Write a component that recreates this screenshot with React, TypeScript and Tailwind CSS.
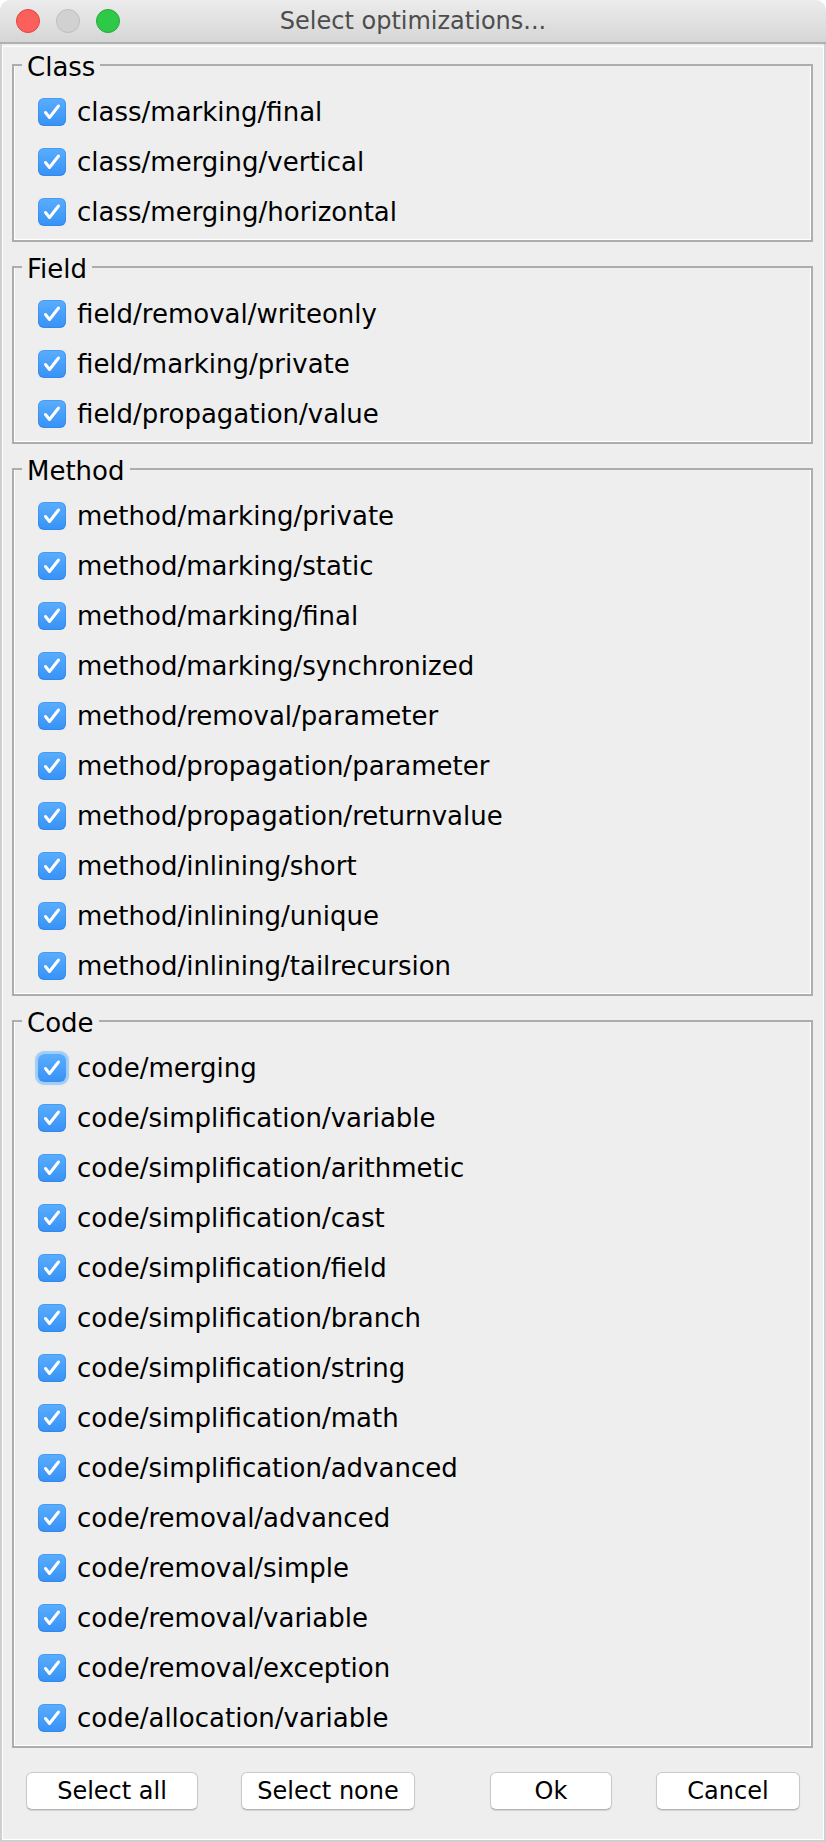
import * as React from "react";

const groups: { title: string; items: string[] }[] = [
  {
    title: "Class",
    items: ["class/marking/final", "class/merging/vertical", "class/merging/horizontal"],
  },
  {
    title: "Field",
    items: ["field/removal/writeonly", "field/marking/private", "field/propagation/value"],
  },
  {
    title: "Method",
    items: [
      "method/marking/private",
      "method/marking/static",
      "method/marking/final",
      "method/marking/synchronized",
      "method/removal/parameter",
      "method/propagation/parameter",
      "method/propagation/returnvalue",
      "method/inlining/short",
      "method/inlining/unique",
      "method/inlining/tailrecursion",
    ],
  },
  {
    title: "Code",
    items: [
      "code/merging",
      "code/simplification/variable",
      "code/simplification/arithmetic",
      "code/simplification/cast",
      "code/simplification/field",
      "code/simplification/branch",
      "code/simplification/string",
      "code/simplification/math",
      "code/simplification/advanced",
      "code/removal/advanced",
      "code/removal/simple",
      "code/removal/variable",
      "code/removal/exception",
      "code/allocation/variable",
    ],
  },
];

function CheckBox({ checked, focused, onToggle }: { checked: boolean; focused: boolean; onToggle: () => void }) {
  let look = "border border-[#b5b5b5] bg-white";
  if (checked) {
    look = focused
      ? "bg-linear-to-b from-[#5aaeff] to-[#3791f5] shadow-[0_0_1px_3px_#a3ccf5]"
      : "bg-linear-to-b from-[#5aaeff] to-[#3791f5] shadow-[inset_0_0_0_1px_rgba(40,120,220,0.35)]";
  }
  return (
    <button
      type="button"
      onClick={onToggle}
      className={`flex h-[28px] w-[28px] shrink-0 items-center justify-center rounded-[6px] ${look}`}
    >
      {checked && (
        <svg width="28" height="28" viewBox="0 0 28 28">
          <path d="M7.5 14.5 L11.5 19.5 L20.5 8" fill="none" stroke="#fff" strokeWidth="3" strokeLinecap="round" strokeLinejoin="round" />
        </svg>
      )}
    </button>
  );
}

function Group({
  title,
  items,
  checked,
  onToggle,
}: {
  title: string;
  items: string[];
  checked: Record<string, boolean>;
  onToggle: (name: string) => void;
}) {
  return (
    <fieldset className="ml-[9px] mr-[10px] mt-[8px] border-2 border-[#adadad] shadow-[inset_1px_0_0_#fff,inset_-1px_-1px_0_#fff] first:mt-[1px]">
      <legend className="ml-[8px] px-[5px] pt-[4px] text-[26px] leading-[30px] text-black">{title}</legend>
      <div className="pb-[3px] pl-[24px] pt-[5px]">
        {items.map((name) => (
          <div key={name} className="flex h-[50px] items-center gap-[11px]">
            <CheckBox checked={checked[name]} focused={name === "code/merging"} onToggle={() => onToggle(name)} />
            <span className="text-[26px] leading-[30px] text-black">{name}</span>
          </div>
        ))}
      </div>
    </fieldset>
  );
}

export default function App() {
  const [checked, setChecked] = React.useState<Record<string, boolean>>(() => {
    const all: Record<string, boolean> = {};
    groups.forEach((g) => g.items.forEach((i) => (all[i] = true)));
    return all;
  });

  const setAll = (value: boolean) => {
    const next: Record<string, boolean> = {};
    groups.forEach((g) => g.items.forEach((i) => (next[i] = value)));
    setChecked(next);
  };

  const btn =
    "flex h-[38px] items-center justify-center rounded-[6px] border border-[#c9c9c9] border-b-[#b4b4b4] bg-white text-[24px] text-black shadow-[0_1px_1px_rgba(0,0,0,0.12)]";

  return (
    <div className="h-[1842px] w-[826px] bg-white font-['DejaVu_Sans',sans-serif]">
      <div className="flex h-full flex-col overflow-hidden rounded-t-[10px]">
        {/* title bar */}
        <div className="grid h-[44px] shrink-0 grid-cols-[1fr_auto_1fr] items-center border-b-2 border-[#b0b0b0] bg-linear-to-b from-[#ececec] to-[#d6d6d6]">
          <div className="flex items-center gap-[16px] pl-[16px]">
            <span className="h-[24px] w-[24px] rounded-full border border-[#e0443e] bg-[#fc605c]" />
            <span className="h-[24px] w-[24px] rounded-full border border-[#bdbdbd] bg-[#d1d1d1]" />
            <span className="h-[24px] w-[24px] rounded-full border border-[#24a83a] bg-[#2fc94a]" />
          </div>
          <div className="text-[24px] text-[#4d4d4d]">Select optimizations...</div>
          <div />
        </div>

        {/* body */}
        <div className="flex flex-1 flex-col border-x-2 border-b-2 border-[#cfcfcf] bg-[#eeeeee] pt-[2px]">
          <div className="flex flex-1 flex-col border border-white">
            {groups.map((g) => (
              <Group
                key={g.title}
                title={g.title}
                items={g.items}
                checked={checked}
                onToggle={(name) => setChecked((c) => ({ ...c, [name]: !c[name] }))}
              />
            ))}

            <div className="mt-[24px] flex pl-[23px]">
              <button type="button" onClick={() => setAll(true)} className={`${btn} w-[172px]`}>
                Select all
              </button>
              <button type="button" onClick={() => setAll(false)} className={`${btn} ml-[43px] w-[174px]`}>
                Select none
              </button>
              <button type="button" className={`${btn} ml-[75px] w-[122px]`}>
                Ok
              </button>
              <button type="button" className={`${btn} ml-[44px] w-[144px]`}>
                Cancel
              </button>
            </div>
          </div>
        </div>
      </div>
    </div>
  );
}
